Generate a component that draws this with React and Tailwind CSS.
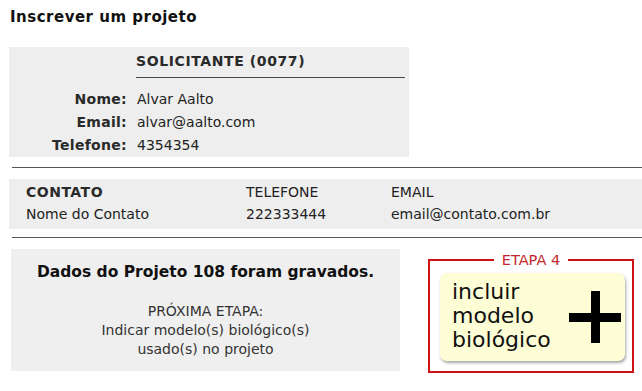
const solicitante = [
  { label: "Nome:", value: "Alvar Aalto" },
  { label: "Email:", value: "alvar@aalto.com" },
  { label: "Telefone:", value: "4354354" },
];

const App = () => {
  return (
    <div className="w-[642px] h-[391px] overflow-hidden bg-white font-['DejaVu_Sans','Verdana',sans-serif] text-[14px] leading-[16px] text-[#222]">
      <h1 className="pl-[10px] pt-[9px] font-bold text-[15px] tracking-[0.5px] leading-[16px] text-[#111]">
        Inscrever um projeto
      </h1>

      {/* Solicitante */}
      <div className="ml-[9px] mt-[22px] w-[400px] h-[110px] bg-[#eeeeee] pt-[5px] pr-[4px] grid grid-cols-[118px_1fr] gap-x-[9px] gap-y-[7px] content-start">
        <div className="col-start-2 mb-[6px] border-b border-[#444] pb-[8px] pt-[1px] font-bold tracking-[0.6px] text-[#2a2a2a]">
          SOLICITANTE (0077)
        </div>
        {solicitante.map((row) => (
          <div key={row.label} className="contents">
            <span className="col-start-1 text-right font-bold tracking-[0.3px] text-[#2a2a2a]">{row.label}</span>
            <span className="pl-[1px]">{row.value}</span>
          </div>
        ))}
      </div>

      <div className="ml-[12px] mt-[10px] border-t border-[#555]"></div>

      {/* Contato */}
      <div className="ml-[9px] mt-[11px] h-[50px] bg-[#eeeeee] pl-[17px] pt-[5px] grid grid-cols-[220px_145px_1fr] gap-y-[6px] content-start">
        <span className="font-bold tracking-[0.5px] text-[#2a2a2a]">CONTATO</span>
        <span>TELEFONE</span>
        <span>EMAIL</span>
        <span>Nome do Contato</span>
        <span>222333444</span>
        <span>email@contato.com.br</span>
      </div>

      <div className="ml-[12px] mt-[8px] border-t border-[#555]"></div>

      {/* Resultado + próxima etapa */}
      <div className="mt-[11px] flex items-start">
        <div className="ml-[11px] w-[389px] h-[122px] bg-[#efefef] flex flex-col items-center pt-[14px]">
          <p className="font-bold text-[15.5px] leading-[18px] text-[#111]">
            Dados do Projeto 108 foram gravados.
          </p>
          <p className="mt-[21px] text-center leading-[19px] text-[#333]">
            PRÓXIMA ETAPA:
            <br />
            Indicar modelo(s) biológico(s)
            <br />
            usado(s) no projeto
          </p>
        </div>

        <fieldset className="ml-[28px] mt-[4px] w-[206px] h-[120px] border-2 border-[#cc1416] px-[10px] pb-[8px] pt-0 min-w-0">
          <legend className="mx-auto px-[8px] text-[14.5px] leading-[14px] text-[#c0282d]">
            ETAPA 4
          </legend>
          <button className="mt-[6px] w-[185px] h-[88px] rounded-[7px] bg-[#fdfdd6] shadow-[1px_2px_3px_rgba(0,0,0,0.35)] flex items-center justify-between pl-[12px] pr-[4px] text-left">
            <span className="text-[22px] leading-[24px] text-[#111] -mt-[3px]">
              incluir
              <br />
              modelo
              <br />
              biológico
            </span>
            <svg width="52" height="52" viewBox="0 0 52 52" className="-mt-[1px]">
              <rect x="22" y="0" width="9" height="52" fill="#000" />
              <rect x="0" y="22" width="52" height="9" fill="#000" />
            </svg>
          </button>
        </fieldset>
      </div>
    </div>
  );
};

export default App;
